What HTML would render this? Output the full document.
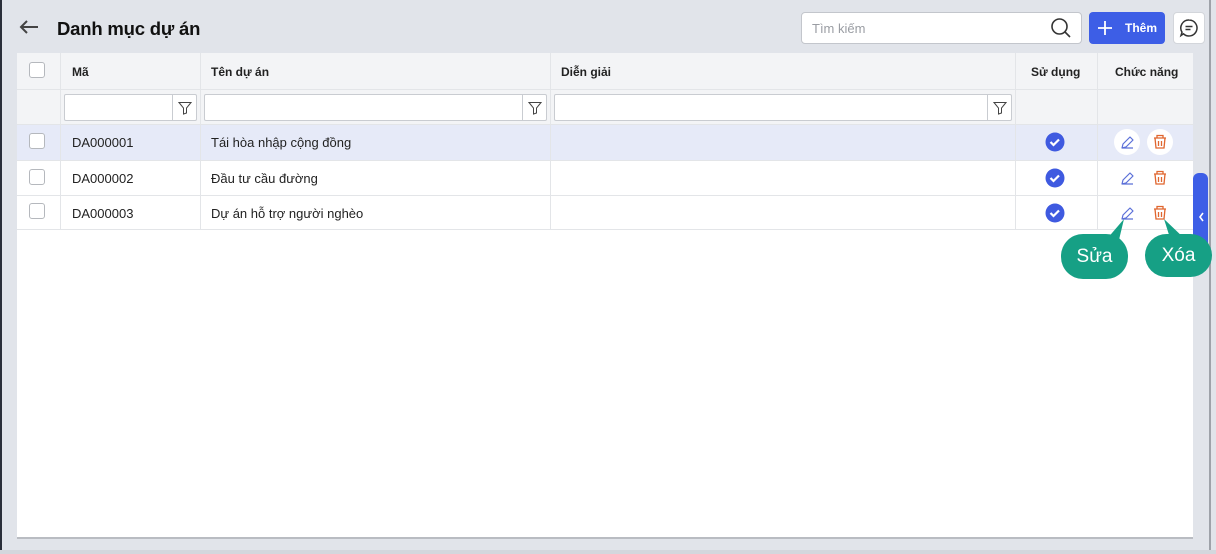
<!DOCTYPE html>
<html><head><meta charset="utf-8"><style>
*{box-sizing:border-box;margin:0;padding:0}
body{width:1216px;height:554px;background:#e1e4ea;font-family:"Liberation Sans",sans-serif;position:relative;overflow:hidden;color:#212121}
.abs{position:absolute}
.panel{left:17px;top:53px;width:1176px;height:486px;background:#fff;border-bottom:2px solid #b9bcc2}
.hline{position:absolute;left:17px;width:1176px;height:1px;background:#e3e5e8}
.vline{position:absolute;width:1px;background:#e3e5e8}
.cb{position:absolute;width:16px;height:16px;border:1px solid #b5b8bd;border-radius:3px;background:#fff;left:29px}
.th{position:absolute;top:65px;font-size:12px;font-weight:bold;color:#222}
.td{position:absolute;font-size:13px;color:#222}
.inp{position:absolute;top:94px;height:27px;background:#fff;border:1px solid #c9ccd1;border-radius:2px}
.inp .f{position:absolute;right:0;top:0;width:24px;height:25px;border-left:1px solid #c9ccd1;display:flex;align-items:center;justify-content:center}
.bubble{position:absolute;background:#16a085;color:#fff;font-size:19px;border-radius:22px;display:flex;align-items:center;justify-content:center}
</style></head><body>
<div class="abs" style="left:0;top:0;width:2px;height:554px;background:#2a2f3a"></div>
<div class="abs" style="left:1209px;top:0;width:2px;height:554px;background:#9ea2a9"></div>
<div class="abs" style="left:0;top:550px;width:1216px;height:4px;background:#d4d7dd"></div>
<svg class="abs" style="left:18px;top:19px" width="22" height="16" viewBox="0 0 22 16"><path d="M20 8H3M9 2L3 8l6 6" stroke="#444" stroke-width="2" fill="none"/></svg>
<div class="abs" style="left:57px;top:18px;font-size:18.5px;font-weight:bold;color:#111;letter-spacing:-0.2px">Danh mục dự án</div>
<div class="abs" style="left:801px;top:12px;width:281px;height:32px;background:#fff;border:1px solid #c3c6cc;border-radius:4px;font-size:13px;color:#9a9da3;padding:8px 10px">Tìm kiếm</div>
<svg class="abs" style="left:1050px;top:17px" width="22" height="22" viewBox="0 0 22 22"><circle cx="9.5" cy="9.5" r="7.5" stroke="#333" stroke-width="1.6" fill="none"/><path d="M15 15l5 5" stroke="#333" stroke-width="1.6"/></svg>
<div class="abs" style="left:1089px;top:12px;width:76px;height:32px;background:#3d5ee6;border-radius:4px;color:#fff;font-size:12px;font-weight:bold;display:flex;align-items:center;padding-left:8px"><svg width="16" height="16" viewBox="0 0 16 16"><path d="M8 1v14M1 8h14" stroke="#fff" stroke-width="1.8"/></svg><span style="margin-left:12px">Thêm</span></div>
<div class="abs" style="left:1173px;top:12px;width:32px;height:32px;background:#fff;border:1px solid #d3d6db;border-radius:4px"></div>
<svg class="abs" style="left:1178px;top:17px" width="22" height="22" viewBox="0 0 22 22"><path d="M11 3a8 8 0 1 1-5.5 13.8L3 18.5l1-3.3A8 8 0 0 1 11 3z" stroke="#333" stroke-width="1.5" fill="none"/><path d="M7.5 9.5h7M7.5 12.5h5" stroke="#333" stroke-width="1.5"/></svg>

<div class="abs panel"></div>
<div class="abs" style="left:17px;top:53px;width:1176px;height:71px;background:#f3f4f6"></div>
<div class="abs" style="left:17px;top:125px;width:1176px;height:35px;background:#e6eaf8"></div>
<div class="hline" style="top:89px"></div>
<div class="hline" style="top:124px"></div>
<div class="hline" style="top:160px"></div>
<div class="hline" style="top:195px"></div>
<div class="hline" style="top:229px"></div>
<div class="vline" style="left:60px;top:53px;height:177px"></div>
<div class="vline" style="left:200px;top:53px;height:177px"></div>
<div class="vline" style="left:550px;top:53px;height:177px"></div>
<div class="vline" style="left:1015px;top:53px;height:177px"></div>
<div class="vline" style="left:1097px;top:53px;height:177px"></div>

<div class="cb" style="top:62px"></div>
<div class="th" style="left:72px">Mã</div>
<div class="th" style="left:211px">Tên dự án</div>
<div class="th" style="left:561px">Diễn giải</div>
<div class="th" style="left:1031px">Sử dụng</div>
<div class="th" style="left:1115px">Chức năng</div>

<div class="inp" style="left:64px;width:133px"><div class="f"><svg width="14" height="14" viewBox="0 0 14 14"><path d="M1 1.5h12L8.5 7v5L5.5 13V7z" stroke="#444" fill="none"/></svg></div></div>
<div class="inp" style="left:204px;width:343px"><div class="f"><svg width="14" height="14" viewBox="0 0 14 14"><path d="M1 1.5h12L8.5 7v5L5.5 13V7z" stroke="#444" fill="none"/></svg></div></div>
<div class="inp" style="left:554px;width:458px"><div class="f"><svg width="14" height="14" viewBox="0 0 14 14"><path d="M1 1.5h12L8.5 7v5L5.5 13V7z" stroke="#444" fill="none"/></svg></div></div>

<div class="cb" style="top:133px"></div>
<div class="cb" style="top:169px"></div>
<div class="cb" style="top:203px"></div>
<div class="td" style="left:72px;top:135px">DA000001</div>
<div class="td" style="left:72px;top:171px">DA000002</div>
<div class="td" style="left:72px;top:206px">DA000003</div>
<div class="td" style="left:211px;top:135px">Tái hòa nhập cộng đồng</div>
<div class="td" style="left:211px;top:171px">Đầu tư cầu đường</div>
<div class="td" style="left:211px;top:206px">Dự án hỗ trợ người nghèo</div>

<svg style="position:absolute;left:0;top:0" width="1216" height="554">
<defs>
<g id="ck"><circle cx="0" cy="0" r="9.5" fill="#3f5ae0"/><path d="M-4.5 0l3 3 5.5-5.5" stroke="#fff" stroke-width="2.2" fill="none"/></g>
<g id="ed"><path d="M-5 6h11M-5 6l1-4 7-7 3 3-7 7z" stroke="#5b6fd8" stroke-width="1.2" fill="none" stroke-linejoin="round"/></g>
<g id="tr"><path d="M-6-4h12M-3-4v-2.5h6V-4M-5-4l1 10h8l1-10M-1.5-1v5M1.5-1v5" stroke="#e0662f" stroke-width="1.3" fill="none"/></g>
</defs>
<use href="#ck" x="1055" y="142"/><use href="#ck" x="1055" y="178"/><use href="#ck" x="1055" y="213"/>
<circle cx="1127" cy="142" r="13" fill="#fff"/><circle cx="1160" cy="142" r="13" fill="#fff"/>
<use href="#ed" x="1127" y="142"/><use href="#ed" x="1127" y="178"/><use href="#ed" x="1127" y="213"/>
<use href="#tr" x="1160" y="142"/><use href="#tr" x="1160" y="178"/><use href="#tr" x="1160" y="213"/>
<path d="M1106 240L1124 219L1118 244z" fill="#16a085"/>
<path d="M1170 238L1164 219L1186 240z" fill="#16a085"/>
<rect x="1193" y="173" width="15" height="90" rx="6" fill="#3d5ee6"/>
<path d="M1203 213l-3 4 3 4" stroke="#fff" stroke-width="1.6" fill="none"/>
</svg>
<div class="bubble" style="left:1061px;top:234px;width:67px;height:45px">Sửa</div>
<div class="bubble" style="left:1145px;top:234px;width:67px;height:43px">Xóa</div>
</body></html>
